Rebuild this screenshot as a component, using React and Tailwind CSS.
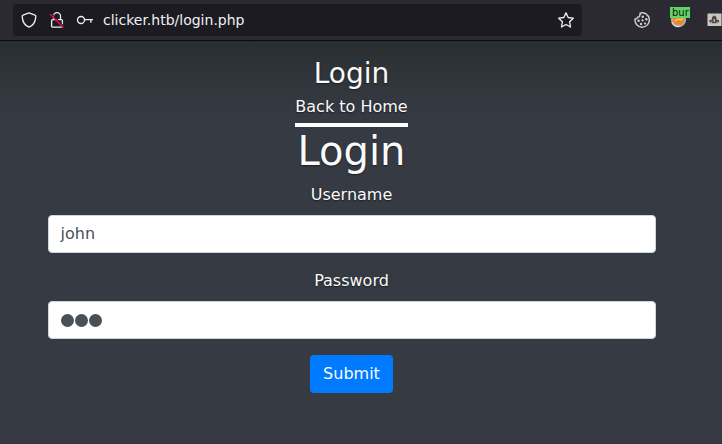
const textShadow = "[text-shadow:0_0.8px_1.6px_rgba(0,0,0,0.5)]";

function AddressBar() {
  return (
    <div className="ml-[13px] flex h-8 w-[569px] items-center rounded bg-[#1c1b22] text-[#f0f0f4]">
      <svg className="ml-2 h-4 w-4 shrink-0" viewBox="0 0 16 16" fill="none" stroke="currentColor" strokeWidth="1.3" strokeLinejoin="round">
        <path d="M8 .9 L14 3.1 Q14.9 3.4 14.8 4.4 C14.5 9.6 12.4 13.5 8 15.2 C3.6 13.5 1.5 9.6 1.2 4.4 Q1.1 3.4 2 3.1 Z" />
      </svg>
      <svg className="ml-3 h-4 w-4 shrink-0" viewBox="0 0 16 16" fill="none" stroke="currentColor" strokeWidth="1.3">
        <path d="M4.5 7.5V4.2a3.5 3.5 0 0 1 7 0v3.3" />
        <rect x="2.6" y="7.6" width="10.8" height="7.6" rx="1.2" />
        <path d="M2.2 1.4 15.4 15" stroke="#1c1b22" strokeWidth="1.2" />
        <path d="M1 2 14.4 15.6" stroke="#f0053f" strokeWidth="1.4" />
      </svg>
      <svg className="ml-3 h-4 w-4 shrink-0 overflow-visible" viewBox="0 0 16 16" fill="none" stroke="currentColor" strokeWidth="1.3">
        <circle cx="4" cy="8" r="3.5" />
        <path d="M7.6 7.6H16M13.9 7.6v3.2" />
      </svg>
      <span className="ml-[10px] text-[14px] leading-5">clicker.htb/login.php</span>
      <svg className="ml-auto mr-2 h-4 w-4 shrink-0 overflow-visible" viewBox="0 0 16 16" fill="none" stroke="currentColor" strokeWidth="1.3" strokeLinejoin="round">
        <path d="m8 .9 2.2 4.6 5.1.7-3.7 3.6.9 5.2L8 12.5 3.5 15l.9-5.2L.7 6.2l5.1-.7Z" />
      </svg>
    </div>
  );
}

function Extensions() {
  return (
    <>
      <svg className="ml-[52px] h-4 w-4 shrink-0" viewBox="0 0 16 16" fill="none" stroke="#cfcfd3" strokeWidth="1.4">
        <path d="M6 1.1A7.2 7.2 0 1 1 1 7c1.300.3 2.300-.4 2.300-1.700C5 5.400 6 4.500 5.600 3.200 6.400 2.600 6.500 1.900 6 1.100Z" strokeLinejoin="round" />
        <g fill="#cfcfd3" stroke="none">
          <circle cx="8.8" cy="4.8" r="1.2" />
          <circle cx="4.6" cy="8.8" r="1.2" />
          <circle cx="8.5" cy="8.4" r="1.1" />
          <circle cx="7" cy="12" r="1.2" />
          <circle cx="11" cy="11.500" r="1.1" />
          <circle cx="12.3" cy="7.3" r="1.2" />
        </g>
      </svg>
      <div className="relative ml-5 h-4 w-4 shrink-0">
        <svg className="h-4 w-4" viewBox="0 0 16 16">
          <circle cx="8.5" cy="7.7" r="7.6" fill="#b9a79a" />
          <path d="M3 3h11v5.5a5.6 5 0 0 1-11 0Z" fill="#ef8425" />
          <path d="m5 9 3-2 3 1 2-2" fill="none" stroke="#ffd29b" strokeWidth="1.1" />
          <path d="M2 10c1 4 5 5.5 8 4" fill="none" stroke="#e4dcd5" strokeWidth="1.1" />
        </svg>
        <span className="absolute -top-[5px] left-0 h-[11px] w-5 overflow-hidden whitespace-nowrap bg-[#61d365] pl-[2px] text-[10px] leading-[11px] text-[#10220f]">
          bur
        </span>
      </div>
      <svg className="ml-5 h-4 w-4 shrink-0" viewBox="0 0 16 16">
        <rect x="1.5" y="1.5" width="14" height="12.5" fill="#cfc5c0" />
        <path d="M3.500 10V8.200L6 7.500V5.500l1.500-1.700h1.500l1.500 1.700v2l2.500.7V10l-2 1.200H5.500Z" fill="#4a4542" />
        <path d="M7.5 7h1.500v3H7.5ZM5 9.500h1.200v2H5ZM10.500 9.500h1.200v2h-1.200Z" fill="#b5aaa5" />
      </svg>
    </>
  );
}

export default function App() {
  return (
    <div className="flex h-[444px] w-[722px] flex-col overflow-hidden bg-[#363a42] font-['DejaVu_Sans',sans-serif]">
      <header className="flex h-[41px] shrink-0 items-center overflow-hidden border-b border-[#0c0c0d] bg-[#2b2a33]">
        <AddressBar />
        <Extensions />
      </header>
      <main className={`flex flex-1 flex-col items-center border-b border-[#38343f] bg-[#363a42] bg-[linear-gradient(to_bottom,#2a2e31_0px,#2e3337_24px,#32373e_48px,#363a42_80px)] pr-[19px] pt-4 text-base text-[#fafafa] ${textShadow}`}>
        <h3 className="h-[34px] text-[28px] leading-[33.6px]">Login</h3>
        <a className="mt-1 h-8 border-b-4 border-white leading-6">Back to Home</a>
        <h1 className="h-12 text-[40px] leading-[48px]">Login</h1>
        <form className="flex w-[609px] flex-col items-center">
          <label className="mt-2 h-6 leading-6">Username</label>
          <div className="mt-2 flex h-[38px] w-[608px] items-center self-end rounded border border-[#ced4da] bg-white px-[11.5px] text-[#495057] [text-shadow:none]">john</div>
          <label className="mt-4 h-6 leading-6">Password</label>
          <div className="mt-2 flex h-[38px] w-[608px] items-center gap-px self-end rounded border border-[#ced4da] bg-white px-3 pt-px [text-shadow:none]">
            <span className="h-[13px] w-[13px] rounded-full bg-[#495057]" />
            <span className="h-[13px] w-[13px] rounded-full bg-[#495057]" />
            <span className="h-[13px] w-[13px] rounded-full bg-[#495057]" />
          </div>
          <button type="button" className="mt-4 h-[38px] w-[83px] rounded bg-[#007bff] text-center leading-6 [text-shadow:none]">Submit</button>
        </form>
      </main>
    </div>
  );
}
